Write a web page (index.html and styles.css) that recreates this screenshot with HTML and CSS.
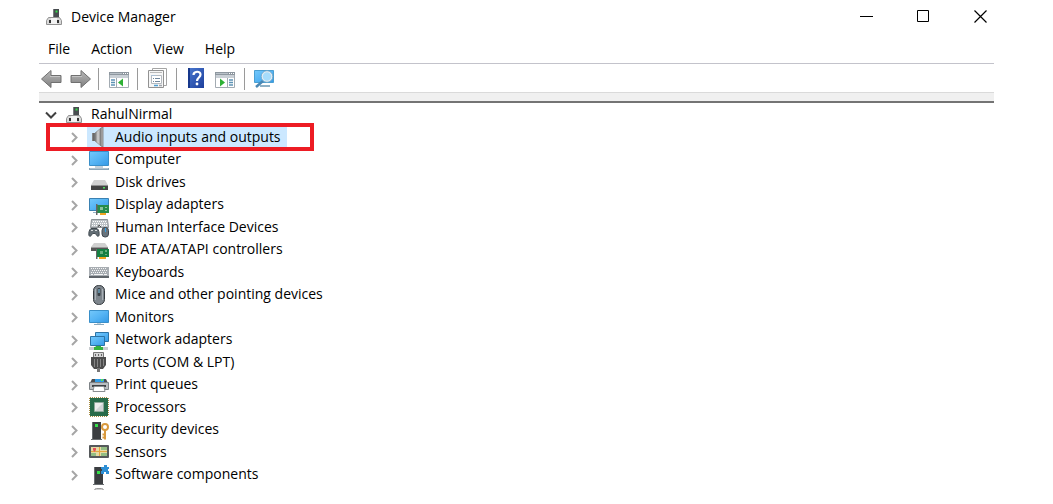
FILE: index.html
```
<!DOCTYPE html>
<html lang="en">
<head>
    <meta charset="UTF-8">
    <meta name="viewport" content="width=device-width, initial-scale=1.0">
    <title>Device Manager</title>
    <link rel="stylesheet" href="styles.css">
</head>
<body>
    <!-- shared gradients and repeated icons -->
    <svg class="defs" width="0" height="0" aria-hidden="true">
        <defs>
            <linearGradient id="screen" x1="0" y1="0" x2="1" y2="1">
                <stop offset="0" stop-color="#74c8fb"/>
                <stop offset="0.5" stop-color="#55b4f4"/>
                <stop offset="1" stop-color="#3499e6"/>
            </linearGradient>
            <linearGradient id="arrow" x1="0" y1="0" x2="0" y2="1">
                <stop offset="0" stop-color="#b9b9b9"/>
                <stop offset="1" stop-color="#808080"/>
            </linearGradient>
            <linearGradient id="metal" x1="0" y1="0" x2="1" y2="0">
                <stop offset="0" stop-color="#6b6b6b"/>
                <stop offset="0.5" stop-color="#d5d5d5"/>
                <stop offset="1" stop-color="#7c7c7c"/>
            </linearGradient>
            <linearGradient id="help" x1="0" y1="0" x2="1" y2="1">
                <stop offset="0" stop-color="#4a78d0"/>
                <stop offset="1" stop-color="#1d3f9c"/>
            </linearGradient>
            <symbol id="pc" viewBox="0 0 18 18">
                <path fill="#484c4f" d="M8 1h6v9H8z"/>
                <path fill="#777b7e" d="M8 1h1v9H8z"/>
                <path fill="#35df4a" d="M10.500 2.500h2v2h-2z"/>
                <path fill="#d9d9d9" stroke="#929292" d="M3.500 9.500h11l2 3v4h-15v-4z"/>
                <path fill="#f3f3f3" d="M6 10h6v6H6z"/>
                <path fill="#333" d="M4 12h2v3H4zM12 12h2v3h-2z"/>
            </symbol>
            <symbol id="chevron" viewBox="0 0 12 12">
                <path fill="none" stroke="#a6a6a6" stroke-width="2" d="M4 2l4.500 4.500L4 11"/>
            </symbol>
        </defs>
    </svg>

    <div class="window">
        <header class="titlebar">
            <svg class="app-icon" width="18" height="18"><use href="#pc"/></svg>
            <h1 class="title">Device Manager</h1>
            <div class="controls">
                <button class="control" aria-label="Minimize"><svg width="14" height="14"><path stroke="#000" d="M1 6.500h13"/></svg></button>
                <button class="control" aria-label="Maximize"><svg width="14" height="14"><path fill="none" stroke="#000" d="M1.500.5h11v11h-11z"/></svg></button>
                <button class="control" aria-label="Close"><svg width="14" height="14"><path stroke="#000" stroke-width="1.200" d="M1.500.5l12 12M13.500.5l-12 12"/></svg></button>
            </div>
        </header>

        <nav class="menubar">
            <button class="menu">File</button>
            <button class="menu">Action</button>
            <button class="menu">View</button>
            <button class="menu">Help</button>
        </nav>

        <div class="toolbar">
            <button class="tool" aria-label="Back">
                <svg width="22" height="22"><path fill="url(#arrow)" stroke="#707070" stroke-linejoin="round" d="M1.500 11L11 2.500v5h10v7H11v5z"/><path stroke="#c4c4c4" d="M10 8.500h10"/></svg>
            </button>
            <button class="tool" aria-label="Forward">
                <svg width="22" height="22"><path fill="url(#arrow)" stroke="#707070" stroke-linejoin="round" d="M21.500 11L12 2.500v5H2v7h10v5z"/><path stroke="#c4c4c4" d="M3 8.500h10"/></svg>
            </button>
            <span class="separator"></span>
            <button class="tool" aria-label="Show or hide console tree">
                <svg width="22" height="22">
                    <path fill="#fff" stroke="#a3abb2" d="M1.500 4.500h19v15h-19z"/>
                    <path fill="#8e979f" d="M1 4h20v3H1z"/>
                    <path stroke="#b9c1c8" d="M2 5.500h12"/>
                    <path stroke="#fff" stroke-dasharray="1 1" d="M15 5.500h5"/>
                    <path fill="#c9cfd5" d="M2 7h18v3H2z"/>
                    <path stroke="#a3abb2" d="M8.500 10v9"/>
                    <path stroke="#5d93b5" stroke-width="1.500" d="M3 12h4M3 14.500h4M3 17h4"/>
                    <path fill="#2eb135" d="M10 14.500l5-4v8z"/>
                </svg>
            </button>
            <span class="separator"></span>
            <button class="tool" aria-label="Properties">
                <svg width="22" height="22">
                    <path fill="#fff" stroke="#a5a5a5" d="M5.500.5h14v17h-14z"/>
                    <path fill="#f6f6f6" stroke="#929292" d="M1.500 2.500h15v17h-15z"/>
                    <path stroke="#bababa" d="M3 4.500h12"/>
                    <path fill="#fff" stroke="#b5bac0" d="M4.500 7.500h10v8h-10z"/>
                    <path stroke="#a9bfd4" d="M4 7.500h5"/>
                    <path stroke="#71879d" d="M6 10.500h1M8 10.500h5M6 13.500h1M8 13.500h5"/>
                    <path stroke="#4f9fd2" stroke-width="1.500" d="M7 17.500h4"/>
                    <path stroke="#a0a6ac" stroke-width="1.500" d="M12 17.500h3"/>
                </svg>
            </button>
            <span class="separator"></span>
            <button class="tool" aria-label="Help">
                <svg width="22" height="22">
                    <path fill="url(#help)" d="M2 0h16v20H2z"/>
                    <path fill="#17388c" d="M2 0h2v20H2z"/>
                    <path fill="none" stroke="#fff" stroke-width="2.200" d="M7.500 7c0-4 7-4.500 7-.5 0 3-3.500 3-3.500 6.500"/>
                    <circle cx="11" cy="16" r="1.400" fill="#fff"/>
                </svg>
            </button>
            <button class="tool" aria-label="Show or hide action pane">
                <svg width="22" height="22">
                    <path fill="#fff" stroke="#a3abb2" d="M.5 4.500h19v15H.5z"/>
                    <path fill="#8e979f" d="M0 4h20v3H0z"/>
                    <path stroke="#b9c1c8" d="M1 5.500h12"/>
                    <path stroke="#fff" stroke-dasharray="1 1" d="M14 5.500h5"/>
                    <path fill="#c9cfd5" d="M1 7h18v3H1z"/>
                    <path stroke="#a3abb2" d="M12.500 10v9"/>
                    <path stroke="#5d93b5" stroke-width="1.500" d="M14 12h4M14 14.500h4M14 17h4"/>
                    <path fill="#2eb135" d="M10 14.500l-5-4v8z"/>
                </svg>
            </button>
            <span class="separator"></span>
            <button class="tool" aria-label="Scan for hardware changes">
                <svg width="22" height="22">
                    <path fill="url(#screen)" stroke="#4a9fd2" d="M.5 2.500h19v12H.5z"/>
                    <path fill="#8db0c6" d="M6 17h10v2H6z"/>
                    <path stroke="#4b87b3" stroke-width="2.500" d="M9 13l-7 6"/>
                    <circle cx="13" cy="8.500" r="5" fill="#a6dcfb" stroke="#e4edf3" stroke-width="1.500"/>
                    <circle cx="13" cy="8.500" r="5.800" fill="none" stroke="#6fa3c5" stroke-width=".8"/>
                </svg>
            </button>
        </div>
        <div class="strip"></div>

        <ul class="tree">
            <li class="row root">
                <button class="expander" aria-label="Collapse"><svg width="12" height="12"><path fill="none" stroke="#404040" stroke-width="2" d="M1 3.500l5 5 5-5"/></svg></button>
                <svg width="18" height="18"><use href="#pc"/></svg>
                <span class="name">RahulNirmal</span>
            </li>
            <li class="row highlighted">
                <button class="expander" aria-label="Expand"><svg width="12" height="12"><use href="#chevron"/></svg></button>
                <span class="item selected">
                    <svg width="22" height="22">
                        <path fill="#686868" d="M4 7h4v8H4z"/>
                        <path fill="url(#metal)" stroke="#888" stroke-width=".7" d="M7 7l6-5v18l-6-5z"/>
                        <path fill="#b5b5b5" stroke="#777" stroke-width=".8" d="M13 2l2-1v20l-2-1z"/>
                        <path fill="#858585" d="M4 7h1v8H4z"/>
                    </svg>
                    <span class="name">Audio inputs and outputs</span>
                </span>
            </li>
            <li class="row">
                <button class="expander" aria-label="Expand"><svg width="12" height="12"><use href="#chevron"/></svg></button>
                <span class="item">
                    <svg width="22" height="22">
                        <path fill="url(#screen)" stroke="#398fc9" d="M1.500 2.500h19v14h-19z"/>
                        <path fill="#c3d1da" d="M7 17h8v2H7z"/>
                        <path fill="#8ba6b8" d="M1 19h20v2H1z"/>
                        <path stroke="#b2c3cf" d="M2 19.500h18"/>
                    </svg>
                    <span class="name">Computer</span>
                </span>
            </li>
            <li class="row">
                <button class="expander" aria-label="Expand"><svg width="12" height="12"><use href="#chevron"/></svg></button>
                <span class="item">
                    <svg width="22" height="22">
                        <path fill="#d2d2d2" d="M6 9h11l3 5H3z"/>
                        <path fill="#444" d="M3 14h17v5H3z"/>
                        <path stroke="#909090" d="M3 14.500h17"/>
                        <path fill="#4be05b" d="M15 16h2v1.500h-2z"/>
                    </svg>
                    <span class="name">Disk drives</span>
                </span>
            </li>
            <li class="row">
                <button class="expander" aria-label="Expand"><svg width="12" height="12"><use href="#chevron"/></svg></button>
                <span class="item">
                    <svg width="22" height="22">
                        <path fill="url(#screen)" stroke="#3a81b2" d="M1.500 4.500h19v12h-19z"/>
                        <path stroke="#96b4c8" d="M5 18.500h5"/>
                        <path fill="#278c4b" d="M9 11h12v8H9z"/>
                        <path fill="#666" d="M8 10h1.500v11H8z"/>
                        <path fill="#8cc39d" d="M12 13h3v3h-3zM17 13h2v1h-2zM17 16h2v1h-2z"/>
                        <path fill="#f0a51f" d="M12 19h6v2h-6z"/>
                    </svg>
                    <span class="name">Display adapters</span>
                </span>
            </li>
            <li class="row">
                <button class="expander" aria-label="Expand"><svg width="12" height="12"><use href="#chevron"/></svg></button>
                <span class="item">
                    <svg width="22" height="22">
                        <path fill="#bcc2c6" stroke="#8c9296" d="M3.500 3.500h16l1 8h-18z"/>
                        <path fill="none" stroke="#fff" stroke-dasharray="1 1" d="M5 5.500h14M4 7.500h16M4 9.500h16"/>
                        <path fill="#636d74" stroke="#414a50" d="M3 12.500h6c2 1 2.500 5 2 7-1 2-2.500 0-3.500-2h-3c-1 2-2.500 4-3.500 2-.5-2 0-6 2-7z"/>
                        <path stroke="#d5d9db" d="M3 14.500h2M7 14.500h2"/>
                        <rect x="14" y="11.500" width="6.500" height="9.500" rx="3" fill="#68747d" stroke="#3e474e"/>
                        <path stroke="#3ba0e1" d="M17.500 12v4"/>
                        <path fill="none" stroke="#4d4d4d" d="M10 11l1-2 2 2"/>
                    </svg>
                    <span class="name">Human Interface Devices</span>
                </span>
            </li>
            <li class="row">
                <button class="expander" aria-label="Expand"><svg width="12" height="12"><use href="#chevron"/></svg></button>
                <span class="item">
                    <svg width="22" height="22">
                        <path fill="#d0d0d0" d="M6 4h11l3 4H3z"/>
                        <path fill="#555" d="M3 8h17v4H3z"/>
                        <path stroke="#999" d="M3 8.500h17"/>
                        <path fill="#666" d="M8 10h1.500v10H8z"/>
                        <path fill="#168043" d="M9 10h12v8H9z"/>
                        <path fill="#65b080" d="M12 12h3v3h-3zM17 11h2v2h-2zM17 15h2v1h-2z"/>
                        <path fill="#f0a51f" d="M11 18h7v2h-7z"/>
                    </svg>
                    <span class="name">IDE ATA/ATAPI controllers</span>
                </span>
            </li>
            <li class="row">
                <button class="expander" aria-label="Expand"><svg width="12" height="12"><use href="#chevron"/></svg></button>
                <span class="item">
                    <svg width="22" height="22">
                        <path fill="#a8adb2" d="M1 6h20v9H1z"/>
                        <path fill="#60656a" d="M1 15h20v2H1z"/>
                        <path fill="none" stroke="#f5f5f5" stroke-dasharray="1 1" d="M3 7.500h16M4 9.500h15M3 11.500h16"/>
                        <path stroke="#f5f5f5" d="M3 13.500h2M6 13.500h9M16 13.500h3"/>
                    </svg>
                    <span class="name">Keyboards</span>
                </span>
            </li>
            <li class="row">
                <button class="expander" aria-label="Expand"><svg width="12" height="12"><use href="#chevron"/></svg></button>
                <span class="item">
                    <svg width="22" height="22">
                        <rect x="5.500" y="1.500" width="11" height="19" rx="5" fill="#7e868d" stroke="#353a3e"/>
                        <path fill="none" stroke="#a9b0b6" d="M7.500 5v11M14.500 5v11"/>
                        <rect x="9.500" y="4" width="3" height="8" rx="1" fill="#3b4248"/>
                        <path stroke="#8bd1f4" d="M11 5v4"/>
                    </svg>
                    <span class="name">Mice and other pointing devices</span>
                </span>
            </li>
            <li class="row">
                <button class="expander" aria-label="Expand"><svg width="12" height="12"><use href="#chevron"/></svg></button>
                <span class="item">
                    <svg width="22" height="22">
                        <path fill="url(#screen)" stroke="#398fc9" d="M1.500 4.500h19v12h-19z"/>
                        <path fill="#c3d1da" d="M9 17h4v2H9z"/>
                        <path stroke="#8aa9bd" d="M6 18.500h10"/>
                    </svg>
                    <span class="name">Monitors</span>
                </span>
            </li>
            <li class="row">
                <button class="expander" aria-label="Expand"><svg width="12" height="12"><use href="#chevron"/></svg></button>
                <span class="item">
                    <svg width="22" height="22">
                        <path fill="url(#screen)" stroke="#2c73a5" d="M7.500 3.500h13v9h-13z"/>
                        <path fill="url(#screen)" stroke="#2c73a5" d="M2.500 7.500h14v9h-14z"/>
                        <path fill="#b8c9d3" d="M7 17h5v1H7z"/>
                        <path fill="#c9cdd0" d="M1 18h19v3H1z"/>
                        <path fill="#34b340" d="M8 17h5v1h2v3H6v-3h2z"/>
                    </svg>
                    <span class="name">Network adapters</span>
                </span>
            </li>
            <li class="row">
                <button class="expander" aria-label="Expand"><svg width="12" height="12"><use href="#chevron"/></svg></button>
                <span class="item">
                    <svg width="22" height="22">
                        <path fill="#d5d5d5" stroke="#777" d="M5.500 1.500h10v5h-10z"/>
                        <path fill="#666" d="M7 3h1v2H7zM10 3h1v2h-1zM13 3h1v2h-1z"/>
                        <path fill="#4d4d4d" d="M3 6h15v8l-3 4H6l-3-4z"/>
                        <path stroke="#868686" d="M6.500 8v8M9.500 8v8M12.500 8v8M15.500 8v7"/>
                        <path fill="#777" d="M9 17h3v4H9z"/>
                    </svg>
                    <span class="name">Ports (COM &amp; LPT)</span>
                </span>
            </li>
            <li class="row">
                <button class="expander" aria-label="Expand"><svg width="12" height="12"><use href="#chevron"/></svg></button>
                <span class="item">
                    <svg width="22" height="22">
                        <path fill="#4b4f52" d="M4 5h14l2 4H2z"/>
                        <path fill="#309be5" d="M7 5h9v3H7z"/>
                        <path fill="#5ee34c" d="M13 5h2v2h-2z"/>
                        <path fill="#babec1" stroke="#7d8286" d="M1.500 8.500h19v7h-19z"/>
                        <path fill="#3e4245" d="M4 11h14v2H4z"/>
                        <path fill="#fff" stroke="#8b8f92" d="M6 12.500h10l1 5H5z"/>
                    </svg>
                    <span class="name">Print queues</span>
                </span>
            </li>
            <li class="row">
                <button class="expander" aria-label="Expand"><svg width="12" height="12"><use href="#chevron"/></svg></button>
                <span class="item">
                    <svg width="22" height="22">
                        <path fill="none" stroke="#a98c42" stroke-dasharray="1 1" d="M2 1.500h18M2 20.500h18M1.500 2v18M20.500 2v18"/>
                        <path fill="#286b4a" d="M2 2h18v18H2z"/>
                        <path fill="#d1d4d5" stroke="#8fa99b" d="M6.500 6.500h9v9h-9z"/>
                        <path fill="#ededed" d="M7 15V7h8z"/>
                    </svg>
                    <span class="name">Processors</span>
                </span>
            </li>
            <li class="row">
                <button class="expander" aria-label="Expand"><svg width="12" height="12"><use href="#chevron"/></svg></button>
                <span class="item">
                    <svg width="22" height="22">
                        <path fill="#3b3e41" d="M4 3h9v18H4z"/>
                        <path fill="#696d70" d="M4 3h1v18H4zM3 20h11v1H3z"/>
                        <path fill="#35df4a" d="M7 5h3v3H7z"/>
                        <circle cx="17" cy="8" r="3" fill="#fff" stroke="#d99a3e" stroke-width="2"/>
                        <path fill="none" stroke="#d99a3e" stroke-width="2" d="M17 11v9.500M17 15.500h-2.500M17 18.500h-2.500"/>
                    </svg>
                    <span class="name">Security devices</span>
                </span>
            </li>
            <li class="row">
                <button class="expander" aria-label="Expand"><svg width="12" height="12"><use href="#chevron"/></svg></button>
                <span class="item">
                    <svg width="22" height="22">
                        <rect x="1" y="4" width="20" height="13" rx="1" fill="#55595b"/>
                        <path fill="#e5d9a4" d="M3 6h16v9H3z"/>
                        <path fill="#93bd83" d="M13 6h6v3h-6zM3 12h5v3H3zM13 12h6v3h-6z"/>
                        <path fill="none" stroke="#e2a741" d="M3 10.500h16M11.500 6v9"/>
                        <path fill="#e9515a" d="M5 7h3v2l-1.500 2L5 9z"/>
                    </svg>
                    <span class="name">Sensors</span>
                </span>
            </li>
            <li class="row">
                <button class="expander" aria-label="Expand"><svg width="12" height="12"><use href="#chevron"/></svg></button>
                <span class="item">
                    <svg width="22" height="22">
                        <path fill="#3b3e41" d="M6 3h9v18H6z"/>
                        <path fill="#696d70" d="M6 3h1v18H6zM5 20h11v1H5z"/>
                        <path fill="#35df4a" d="M9 7h3v3H9z"/>
                        <path fill="#2e8fd5" d="M13 3h3V1h3v2h2v2h-1v2h1v3h-3V8h-2v2h-3V7h1V5h-1z"/>
                    </svg>
                    <span class="name">Software components</span>
                </span>
            </li>
            <li class="row">
                <span class="item last">
                    <svg width="22" height="22">
                        <rect x="6.500" y="2.500" width="9" height="17" rx="2" fill="#d0d0d0" stroke="#999"/>
                    </svg>
                </span>
            </li>
        </ul>
    </div>
</body>
</html>
```

FILE: styles.css
```
*,
*::after {
    box-sizing: border-box;
}
body {
    margin: 0;
    height: 100vh;
    padding: 0 59px 14px 39px;
    background: #fff;
    color: #000;
    font-family: "Open Sans", "Noto Sans", sans-serif;
    font-size: 14px;
    overflow: hidden;
}
button {
    padding: 0;
    border: 0;
    background: none;
    color: inherit;
    font: inherit;
}
svg {
    display: block;
    flex: none;
}
.defs {
    position: absolute;
}
.window {
    display: flex;
    flex-direction: column;
    height: 100%;
}
.titlebar {
    display: flex;
    align-items: center;
    height: 34px;
    padding-left: 6px;
}
.title {
    margin: 0 0 0 8px;
    padding-bottom: 2px;
    font-size: 14px;
    font-weight: normal;
}
.controls {
    display: flex;
    gap: 29px;
    margin-left: auto;
}
.control {
    display: flex;
    justify-content: center;
    align-items: center;
    width: 28px;
    height: 28px;
}
.menubar {
    display: flex;
    align-items: center;
    gap: 21px;
    height: 29px;
    padding-left: 9px;
}
.toolbar {
    display: flex;
    align-items: center;
    gap: 7px;
    height: 30px;
    padding: 2px 0 0 1px;
    border-top: 1px solid #c3c3cb;
    border-bottom: 1px solid #dadada;
}
.tool {
    width: 22px;
    height: 22px;
}
.separator {
    width: 1px;
    height: 22px;
    margin-right: 2px;
    background: #9a9a9a;
}
.strip {
    height: 10px;
    background: #f0f0f0;
    border-bottom: 2px solid #747474;
}

/* device tree */
.tree {
    flex: 1;
    min-height: 0;
    margin: 0;
    padding: 0;
    list-style: none;
    overflow: hidden;
}
.row {
    position: relative;
    display: flex;
    align-items: center;
    height: 22px;
    padding-left: 29px;
}
.row:nth-child(odd) {
    height: 23px;
}
.root {
    gap: 8px;
    padding-left: 6px;
}
.item {
    display: flex;
    align-items: center;
    height: 22px;
    margin-left: 7px;
    padding: 0 6px 0 1px;
}
.item .name {
    margin-left: 5px;
}
.last {
    margin-left: 19px;
}
.selected {
    background: #cce8ff;
}
.highlighted::after {
    content: "";
    position: absolute;
    top: -3px;
    left: 7px;
    width: 268px;
    height: 28px;
    border: 4px solid #ed1c24;
}
.name {
    padding-bottom: 2px;
    white-space: nowrap;
}
```
